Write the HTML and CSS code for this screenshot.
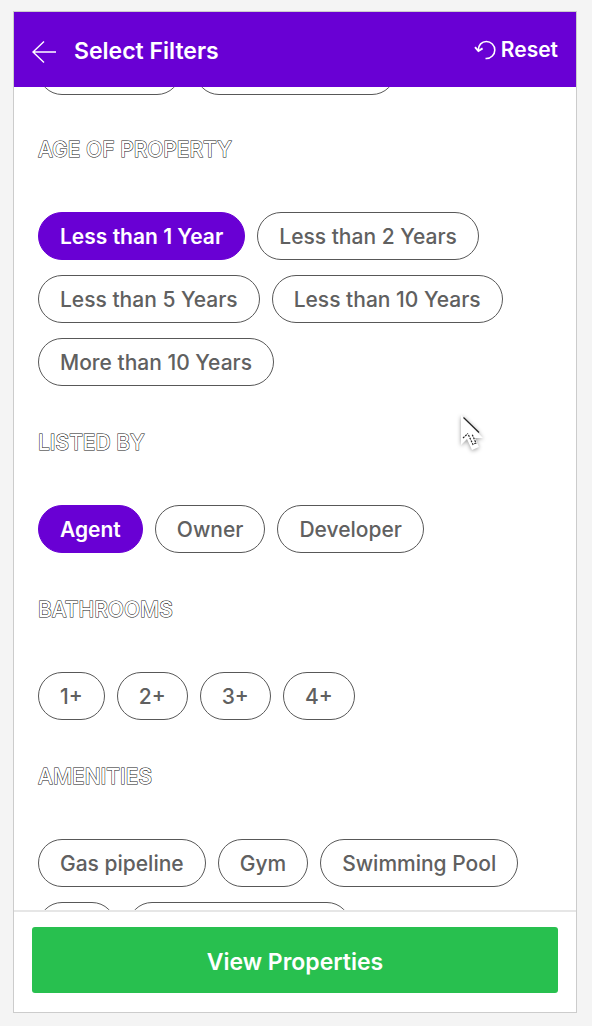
FILE: index.html
```html
<!DOCTYPE html>
<html lang="en">
<head>
<meta charset="utf-8">
<meta name="viewport" content="width=device-width, initial-scale=1">
<title>Select Filters</title>
<link rel="stylesheet" href="styles.css">
</head>
<body>
<div class="screen">
  <header class="topbar">
    <button class="icon-button" type="button" aria-label="Back">
      <svg width="26" height="24" viewBox="0 0 26 24" fill="none" stroke="#fff" stroke-width="1.4"><path d="M25 12H2M13 1.500L2 12l11 10.500"/></svg>
    </button>
    <h1 class="title">Select Filters</h1>
    <button class="reset" type="button">
      <svg width="22" height="20" viewBox="0 0 22 20" fill="none" stroke="#fff" stroke-width="1.6"><path d="M4.300 10.300C4.200 5 7.900 1.500 12.300 1.500a8.500 8.500 0 0 1 0 17h-.8"/><path d="M1 7.200L4.400 11l4.200-2.600" stroke-width="1.900"/></svg>
      Reset
    </button>
  </header>
  <main class="filters">
    <div class="chips chips-above" aria-hidden="true">
      <span class="chip blank-m"></span>
      <span class="chip blank-l"></span>
    </div>
    <section>
      <h2 class="heading">AGE OF PROPERTY</h2>
      <div class="chips">
        <button class="chip selected" type="button" aria-pressed="true">Less than 1 Year</button>
        <button class="chip" type="button">Less than 2 Years</button>
        <button class="chip" type="button">Less than 5 Years</button>
        <button class="chip" type="button">Less than 10 Years</button>
        <button class="chip" type="button">More than 10 Years</button>
      </div>
    </section>
    <section>
      <h2 class="heading">LISTED BY</h2>
      <div class="chips">
        <button class="chip selected" type="button" aria-pressed="true">Agent</button>
        <button class="chip" type="button">Owner</button>
        <button class="chip" type="button">Developer</button>
      </div>
    </section>
    <section>
      <h2 class="heading">BATHROOMS</h2>
      <div class="chips">
        <button class="chip" type="button">1+</button>
        <button class="chip" type="button">2+</button>
        <button class="chip" type="button">3+</button>
        <button class="chip" type="button">4+</button>
      </div>
    </section>
    <section>
      <h2 class="heading">AMENITIES</h2>
      <div class="chips">
        <button class="chip" type="button">Gas pipeline</button>
        <button class="chip" type="button">Gym</button>
        <button class="chip" type="button">Swimming Pool</button>
        <span class="chip blank-s" aria-hidden="true"></span>
        <span class="chip blank-xl" aria-hidden="true"></span>
      </div>
    </section>
  </main>
  <footer class="footer">
    <button class="submit" type="button">View Properties</button>
  </footer>
</div>
<svg class="cursor" width="32" height="44" viewBox="0 0 32 44" aria-hidden="true">
  <path d="M5 4v30l6-6 5 11 7-3-4-9h8z" fill="#fff"/>
  <path d="M7.500 6.500l15.500 15" stroke="#222" stroke-width="1.200" fill="none"/>
  <path d="M7 27l5-4.500M12.500 24l4.500 9.500 3-1.500-4-9" stroke="#222" stroke-width="1.200" stroke-dasharray="2 1" fill="none"/>
</svg>
</body>
</html>
```
FILE: styles.css
```css
* {
  box-sizing: border-box;
}

body {
  margin: 0;
  height: 100vh;
  padding: 11px 15px 13px 13px;
  background: #f4f4f4;
  font-family: Inter, "Liberation Sans", sans-serif;
}

button {
  margin: 0;
  font-family: inherit;
  cursor: pointer;
}

.screen {
  display: flex;
  flex-direction: column;
  height: 100%;
  border: 1px solid #ccc;
  background: #fff;
}

.topbar {
  display: flex;
  align-items: center;
  flex: none;
  padding: 21px 18px 18px 17px;
  background: #6900d4;
  color: #fff;
}

.icon-button,
.reset {
  display: flex;
  align-items: center;
  padding: 0;
  border: 0;
  background: none;
  color: inherit;
}

.icon-button {
  padding-top: 2px;
}

.title {
  flex: 1;
  margin: 0 0 0 17px;
  font-size: 23px;
  font-weight: 600;
  line-height: 36px;
}

.reset {
  gap: 5px;
  padding-bottom: 2px;
  font-size: 21px;
  font-weight: 600;
  line-height: 32px;
}

.filters {
  flex: 1;
  min-height: 0;
  overflow: hidden;
  padding: 0 24px;
}

.chips {
  display: flex;
  flex-wrap: wrap;
  gap: 15px 12px;
}

.chips-above {
  margin: -40px 0 -2px;
  gap: 14px;
}

.chip {
  height: 48px;
  padding: 2px 21px 0;
  border: 1px solid #585858;
  border-radius: 24px;
  background: #fff;
  color: #606060;
  font-size: 21px;
  font-weight: 500;
  line-height: 30px;
}

.selected {
  border-color: #6900d4;
  background: #6900d4;
  color: #fff;
  font-weight: 600;
}

.blank-s { width: 78px; }
.blank-m { width: 143px; }
.blank-l { width: 201px; }
.blank-xl { width: 223px; }

.heading {
  margin: 0;
  padding: 42px 0 47px;
  color: #fff;
  font-size: 21px;
  font-weight: 500;
  line-height: 30px;
  -webkit-text-stroke: 1px #111;
  paint-order: stroke fill;
}

.footer {
  flex: none;
  padding: 15px 18px 19px;
  border-top: 2px solid #e6e6e6;
}

.submit {
  width: 100%;
  height: 66px;
  padding: 3px 0 0;
  border: 0;
  border-radius: 3px;
  background: #28c04f;
  color: #fff;
  font-size: 23px;
  font-weight: 600;
}

.cursor {
  position: absolute;
  left: 456px;
  top: 411px;
  filter: drop-shadow(0 1px 2px rgba(0, 0, 0, 0.4));
}
```
